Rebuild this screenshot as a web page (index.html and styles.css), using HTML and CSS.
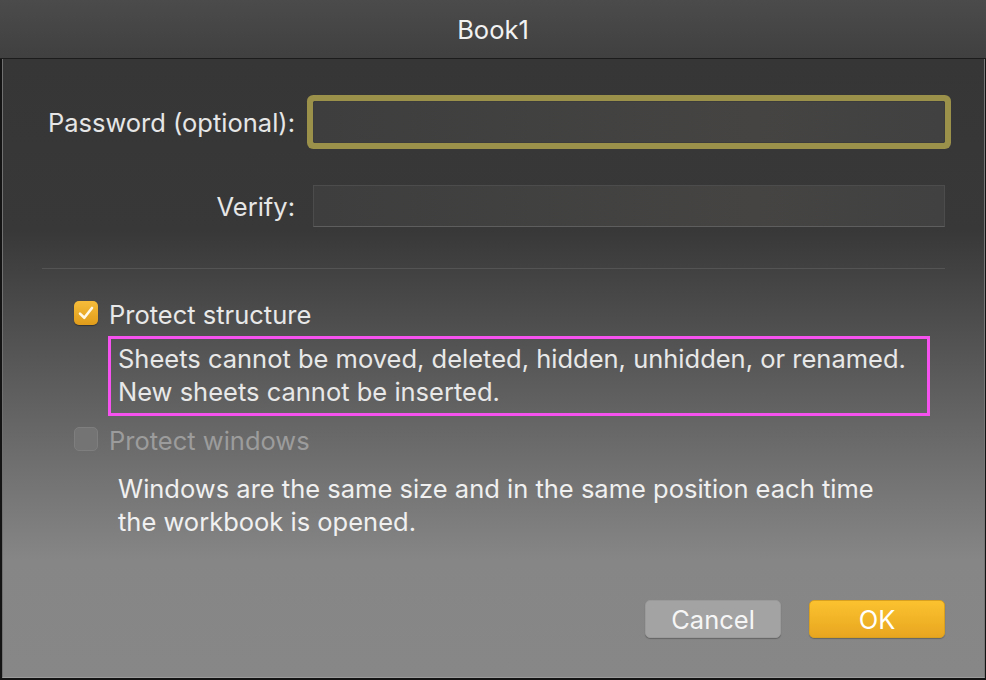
FILE: index.html
```html
<!DOCTYPE html>
<html lang="en">
<head>
<meta charset="utf-8">
<title>Book1</title>
<link rel="stylesheet" href="styles.css">
</head>
<body>
<div class="titlebar"><span class="title">Book1</span></div>
<div class="frame">
  <div class="dialog">
    <div class="fields">
      <label class="label">Password (optional):</label>
      <div class="input focused"></div>
      <label class="label">Verify:</label>
      <div class="input"></div>
    </div>
    <div class="sep"></div>
    <div class="option">
      <span class="check on">
        <svg viewBox="0 0 24 24" width="24" height="24"><path d="M6 12.6 L10.3 16.8 L18 7" fill="none" stroke="#fff8e6" stroke-width="2.6" stroke-linecap="round" stroke-linejoin="round"/></svg>
      </span>
      <span class="opt-label">Protect structure</span>
    </div>
    <div class="desc highlighted">Sheets cannot be moved, deleted, hidden, unhidden, or renamed.<br>New sheets cannot be inserted.</div>
    <div class="option disabled">
      <span class="check"></span>
      <span class="opt-label">Protect windows</span>
    </div>
    <div class="desc plain">Windows are the same size and in the same position each time<br>the workbook is opened.</div>
    <div class="buttons">
      <button class="btn cancel">Cancel</button>
      <button class="btn ok">OK</button>
    </div>
  </div>
</div>
</body>
</html>
```
FILE: styles.css
```css
html, body {
  margin: 0;
  padding: 0;
  height: 100%;
  overflow: hidden;
}
body {
  background: #141414;
  font-family: Inter, "Noto Sans", "Liberation Sans", sans-serif;
  color: #e4e4e4;
}
.titlebar {
  height: 58px;
  border-bottom: 1px solid #1c1c1c;
  background: linear-gradient(to bottom, #4b4b4b, #404040);
  display: flex;
  align-items: center;
  justify-content: center;
}
.title {
  color: #f2f2f2;
  font-size: 25.5px;
}
.frame {
  display: flex;
  padding: 0 1px 0 2px;
}
.dialog {
  flex: 1;
  height: 619px;
  box-sizing: border-box;
  border-left: 1px solid #707070;
  border-right: 1px solid #777777;
  border-bottom: 1px solid #9c9c9c;
  background: linear-gradient(to bottom, #363636 0px, #383838 171px, #868686 501px, #878787 100%);
  padding-top: 42px;
  display: flex;
  flex-direction: column;
}
.dialog > * { flex: none; }
.fields {
  display: grid;
  grid-template-columns: 292px 1fr;
  grid-template-rows: 42px 42px;
  column-gap: 18px;
  row-gap: 42px;
  padding-right: 39px;
  align-items: center;
}
.label {
  text-align: right;
  font-size: 25.5px;
  color: #e6e6e6;
}
.input {
  height: 42px;
  box-sizing: border-box;
  background: linear-gradient(to right, #3e3e3e, #454443 70%, #414141);
  border: 1px solid #4c4c4c;
  border-bottom-color: #5e5e5e;
}
.input.focused {
  border-color: #3c3c3c;
  border-radius: 2px;
  box-shadow: 0 0 0 6px #9b914b;
}
.sep {
  height: 1px;
  background: #545454;
  margin: 41px 39px 0 39px;
}
.option {
  display: flex;
  align-items: center;
  height: 24px;
  margin-top: 32px;
  margin-left: 71px;
  gap: 11px;
}
.check {
  width: 24px;
  height: 24px;
  box-sizing: border-box;
  border-radius: 5px;
  display: flex;
  align-items: center;
  justify-content: center;
  background: #747474;
  border: 1px solid #7e7e7e;
}
.check.on {
  background: linear-gradient(to bottom, #f6bd3a, #e09c1a);
  border: none;
  box-shadow: 0 1px 1px rgba(0, 0, 0, 0.35);
}
.check svg { display: block; }
.opt-label {
  font-size: 25.5px;
  color: #e8e8e8;
  position: relative;
  top: 1px;
}
.disabled .opt-label { color: #9c9c9c; }
.option.disabled { margin-top: 11px; }
.desc {
  margin-left: 105px;
  width: 822px;
  box-sizing: border-box;
  border: 3px solid transparent;
  padding: 3px 7px 5px 7px;
  font-size: 25.5px;
  line-height: 33px;
  color: #e8e8e8;
}
.desc.highlighted {
  border-color: #f552f0;
  margin-top: 11px;
}
.desc.plain {
  margin-top: 15px;
  color: #f0f0f0;
}
.buttons {
  display: flex;
  justify-content: flex-end;
  gap: 28px;
  padding-right: 39px;
  margin-top: 54px;
}
.btn {
  width: 136px;
  height: 38px;
  border-radius: 5px;
  font-family: inherit;
  font-size: 25.5px;
  color: #f6f6f6;
  padding: 0;
  cursor: default;
}
.btn.cancel {
  background: #a3a3a3;
  border: 1px solid #9a9a9a;
  box-shadow: 0 1px 1px rgba(0, 0, 0, 0.25);
}
.btn.ok {
  background: linear-gradient(to bottom, #fbc22f, #e8a620);
  border: 1px solid #d9a020;
  color: #ffffff;
  box-shadow: 0 1px 1px rgba(0, 0, 0, 0.25);
}
```
